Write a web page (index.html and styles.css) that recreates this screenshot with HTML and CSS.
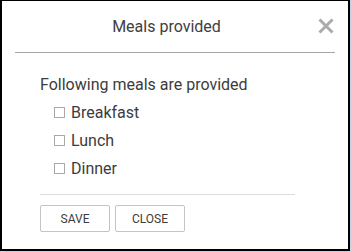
FILE: index.html
```html
<!DOCTYPE html>
<html>
<head>
<meta charset="utf-8">
<link rel="stylesheet" href="styles.css">
</head>
<body>
<div class="dialog">
  <div class="header">
    <div class="title">Meals provided</div>
    <span class="close" aria-label="Close">
      <svg width="16" height="16" viewBox="0 0 16 16"><path d="M1.5 1.5 L14.5 14.5 M14.5 1.5 L1.5 14.5" stroke="#ababab" stroke-width="3" fill="none"/></svg>
    </span>
  </div>
  <div class="content">
    <div class="intro">Following meals are provided</div>
    <div class="option"><span class="box"></span><span>Breakfast</span></div>
    <div class="option"><span class="box"></span><span>Lunch</span></div>
    <div class="option"><span class="box"></span><span>Dinner</span></div>
    <div class="divider"></div>
    <div class="actions">
      <button class="btn">SAVE</button>
      <button class="btn">CLOSE</button>
    </div>
  </div>
</div>
</body>
</html>
```
FILE: styles.css
```css
html, body {
  margin: 0;
  padding: 0;
  background: #c7d0e2;
}
body {
  font-family: Roboto, "Liberation Sans", sans-serif;
  color: #3c3c3c;
}
.dialog {
  box-sizing: border-box;
  width: 350px;
  height: 251px;
  background: #fff;
  border: 2px solid #000;
  border-top-width: 1px;
}
.header {
  display: flex;
  align-items: center;
  margin: 0 13px 0 13px;
  padding: 16px 0 15px 0;
  border-bottom: 1px solid #a6a6a6;
}
.title {
  flex: 1;
  text-align: center;
  font-size: 16px;
  line-height: 20px;
  color: #404040;
}
.close {
  display: flex;
  width: 16px;
  height: 16px;
  margin-right: 1px;
  margin-top: -2px;
}
.content {
  padding: 18px 0 0 38px;
}
.intro {
  font-size: 16px;
  line-height: 28px;
}
.option {
  font-size: 16px;
  line-height: 28px;
  padding-left: 14px;
}
.box {
  display: inline-block;
  box-sizing: border-box;
  width: 11px;
  height: 11px;
  border: 1px solid #a9a9a9;
  margin-right: 6px;
  vertical-align: baseline;
}
.divider {
  width: 255px;
  height: 1px;
  background: #dcdcdc;
  margin-top: 11px;
}
.actions {
  display: flex;
  gap: 5px;
  margin-top: 10px;
}
.btn {
  box-sizing: border-box;
  width: 70px;
  height: 27px;
  background: #fff;
  border: 1px solid #c4c4c4;
  border-radius: 2px;
  font-family: Roboto, "Liberation Sans", sans-serif;
  font-size: 12px;
  color: #3c3c3c;
  padding: 0;
}
```
